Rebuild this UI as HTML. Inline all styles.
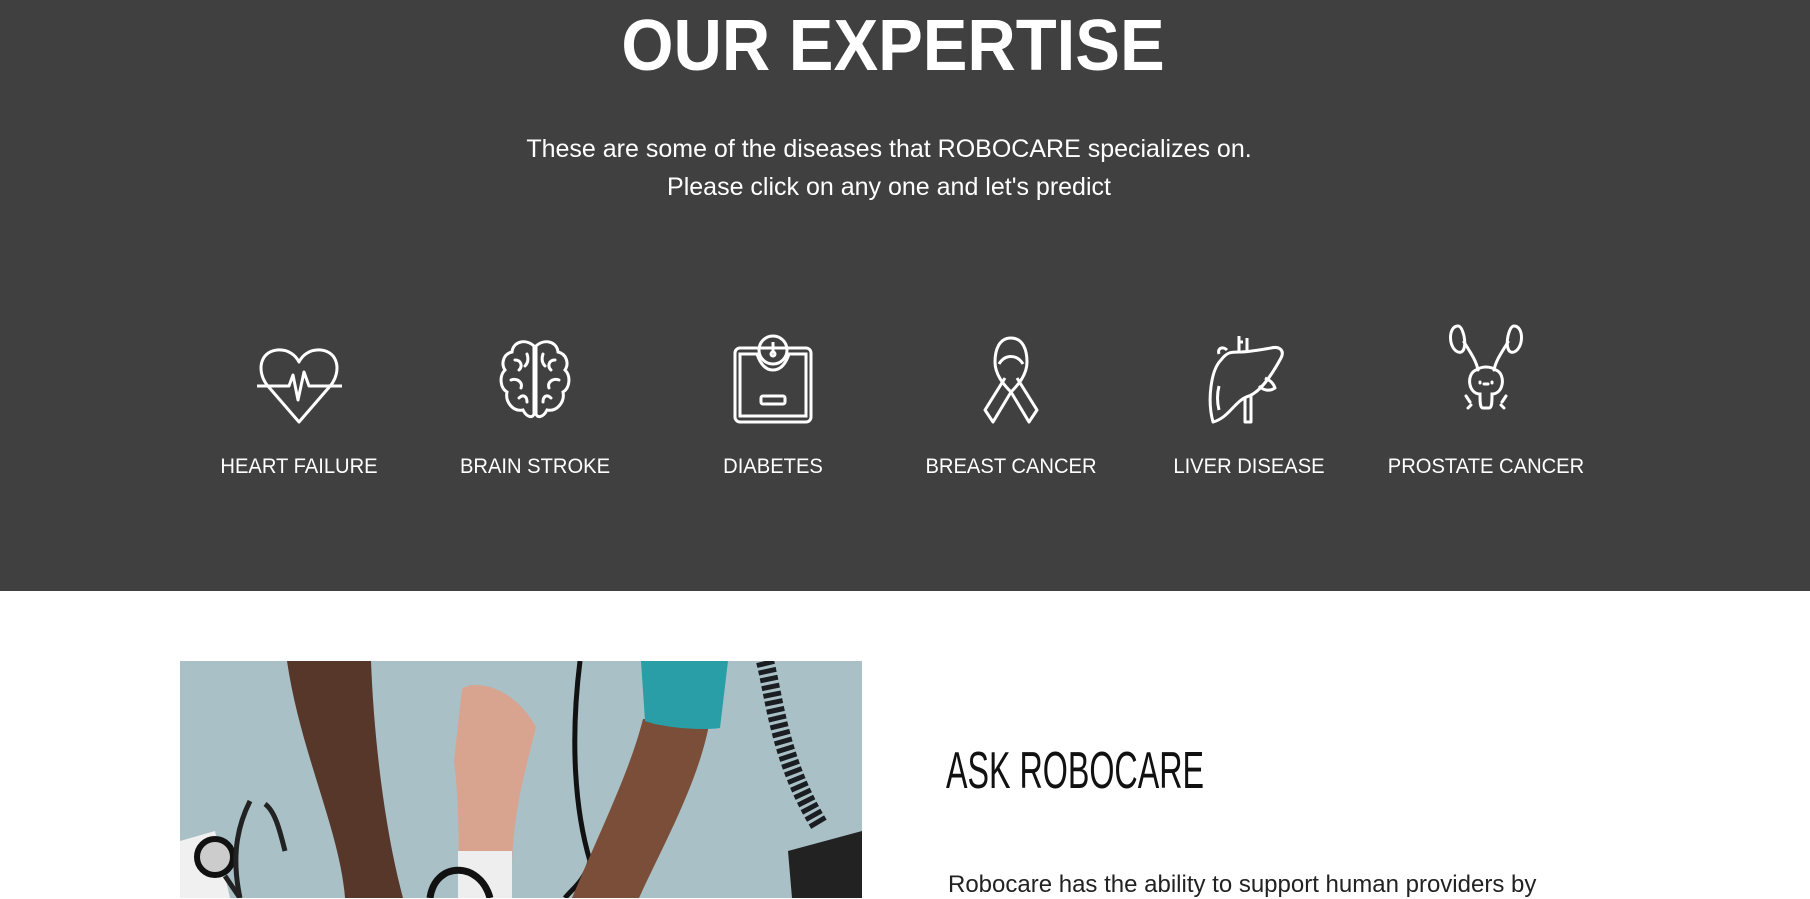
<!DOCTYPE html>
<html><head><meta charset="utf-8"><style>
*{margin:0;padding:0;box-sizing:border-box}
body{width:1810px;height:898px;overflow:hidden;background:#fff;font-family:"Liberation Sans",sans-serif}
.dark{position:absolute;left:0;top:0;width:1810px;height:591px;background:#404040;color:#fff}
h1{position:absolute;left:-12px;width:1810px;top:5px;text-align:center;font-size:72px;font-weight:bold;transform:scaleX(.93)}
.sub{position:absolute;left:-16px;width:1810px;top:130px;text-align:center;font-size:25px;line-height:38px}
.item{position:absolute;top:330px;width:240px;margin-left:-120px;text-align:center}
.item svg{display:block;margin:0 auto;height:100px;width:100px}
.item span{position:absolute;left:0;width:240px;top:125px;font-size:21px;transform:scaleX(.96)}
.img{position:absolute;left:180px;top:661px;width:682px;height:237px}
h2{position:absolute;left:946px;top:741px;font-size:52px;font-weight:normal;transform:scaleX(.62);transform-origin:left;color:#111}
p{position:absolute;left:948px;top:871px;font-size:24px;color:#222;white-space:nowrap}
</style></head><body>
<div class="dark">
<h1>OUR EXPERTISE</h1>
<div class="sub">These are some of the diseases that ROBOCARE specializes on.<br>Please click on any one and let's predict</div>
<div class="item" style="left:299px"><svg viewBox="0 0 100 100" fill="none" stroke="#fff" stroke-width="3" stroke-linejoin="round"><path d="M50 92 L18 55 C8 42 10 22 28 20 C40 19 47 26 50 32 C53 26 60 19 72 20 C90 22 92 42 82 55 Z"/><path d="M8 56 H40 L44 45 L49 70 L55 42 L60 56 H93"/></svg><span>HEART FAILURE</span></div>
<div class="item" style="left:535px"><svg viewBox="0 0 100 100" fill="none" stroke="#fff" stroke-width="3" stroke-linecap="round"><path d="M49 16 C40 8 28 12 27 22 C18 24 16 34 20 40 C14 46 15 58 22 62 C20 72 28 82 38 80 C42 88 48 88 49 84 Z"/><path d="M51 16 C60 8 72 12 73 22 C82 24 84 34 80 40 C86 46 85 58 78 62 C80 72 72 82 62 80 C58 88 52 88 51 84 Z"/><path d="M30 30 C36 30 38 36 34 40 M26 50 C32 48 38 52 36 58 M34 68 C38 64 42 66 42 72 M42 24 C44 30 42 34 40 36 M70 30 C64 30 62 36 66 40 M74 50 C68 48 62 52 64 58 M66 68 C62 64 58 66 58 72 M58 24 C56 30 58 34 60 36"/></svg><span>BRAIN STROKE</span></div>
<div class="item" style="left:773px"><svg viewBox="0 0 100 100" fill="none" stroke="#fff" stroke-width="3"><rect x="12" y="18" width="76" height="74" rx="5"/><path d="M17 24 H34 C38 36 44 40 50 40 C56 40 62 36 66 24 H83 V86 H17 Z"/><circle cx="50" cy="20" r="14"/><path d="M50 12 V22"/><circle cx="50" cy="24" r="2"/><rect x="38" y="66" width="24" height="8" rx="2"/></svg><span>DIABETES</span></div>
<div class="item" style="left:1011px"><svg viewBox="0 0 100 100" fill="none" stroke="#fff" stroke-width="3" stroke-linejoin="round"><path d="M50 8 C38 8 34 20 34 32 C34 44 42 54 50 62 L32 92 L24 80 L44 48"/><path d="M50 8 C62 8 66 20 66 32 C66 44 58 54 50 62 L68 92 L76 80 L56 48"/><path d="M38 34 C44 24 56 24 62 34"/></svg><span>BREAST CANCER</span></div>
<div class="item" style="left:1249px"><svg viewBox="0 0 100 100" fill="none" stroke="#fff" stroke-width="3" stroke-linejoin="round"><path d="M22 30 C12 40 8 70 14 92 C30 88 36 70 50 66 C60 62 70 50 82 28 C86 20 80 16 72 18 C60 20 50 22 40 22 C32 22 28 22 22 30 Z"/><path d="M20 24 C18 18 24 16 28 20 M40 22 V6 M40 12 H44 M48 22 V8"/><path d="M66 48 C70 50 74 52 76 58 C70 62 64 60 60 56 M46 68 V92 H52 V64"/><path d="M20 56 C18 64 18 72 20 80"/></svg><span>LIVER DISEASE</span></div>
<div class="item" style="left:1486px"><svg viewBox="0 0 100 100" fill="none" stroke="#fff" stroke-width="3" stroke-linecap="round" style="margin-top:-8px"><path d="M22 4 C12 4 12 26 22 30 C28 32 30 24 28 14 C26 6 24 4 22 4 Z M78 4 C88 4 88 26 78 30 C72 32 70 24 72 14 C74 6 76 4 78 4 Z"/><path d="M28 20 C34 30 40 38 42 48 M72 20 C66 30 60 38 58 48"/><path d="M40 48 C30 52 32 72 44 72 C44 80 44 86 47 86 H53 C56 86 56 80 56 72 C68 72 70 52 60 48 C54 44 46 44 40 48 Z"/><path d="M44 60 v1 M56 60 v1 M48 62 h4 M30 74 l4 6 M70 74 l-4 6 M32 86 l3 -3 M68 86 l-3 -3"/></svg><span>PROSTATE CANCER</span></div>
</div>
<svg class="img" viewBox="0 0 682 237" preserveAspectRatio="none">
<rect width="682" height="237" fill="#a8c0c6"/>
<path d="M107 0 H191 C194 80 205 170 223 237 H165 C160 170 120 90 107 0 Z" fill="#56372a"/>
<path d="M282 28 C290 20 330 20 356 66 L350 90 C340 130 330 170 332 237 H278 C280 180 278 130 274 100 Z" fill="#d8a490"/>
<path d="M278 190 H332 V237 H278 Z" fill="#eeeeee"/>
<path d="M250 237 C255 200 300 200 310 237" fill="none" stroke="#111" stroke-width="7"/>
<path d="M400 0 C390 80 395 150 410 200 C405 220 390 230 385 237" fill="none" stroke="#111" stroke-width="5"/>
<path d="M463 58 H530 C520 120 480 190 459 237 H392 C420 170 450 110 463 58 Z" fill="#7a4e38"/>
<path d="M461 0 H548 L540 67 C520 70 480 66 465 60 Z" fill="#2a9ea6"/>
<path d="M585 0 C595 40 600 100 640 165" fill="none" stroke="#1a1e22" stroke-width="18" stroke-dasharray="5 3"/>
<path d="M608 190 L682 170 V237 H612 Z" fill="#222"/>
<path d="M0 180 L35 170 L50 237 H0 Z" fill="#f0f0f0"/>
<circle cx="35" cy="196" r="18" fill="#ccc" stroke="#111" stroke-width="6"/>
<path d="M45 215 L60 237 M105 190 C100 170 95 150 85 143 M70 140 C60 160 50 190 60 237" fill="none" stroke="#222" stroke-width="5"/>
</svg>
<h2>ASK ROBOCARE</h2>
<p>Robocare has the ability to support human providers by</p>
</body></html>
